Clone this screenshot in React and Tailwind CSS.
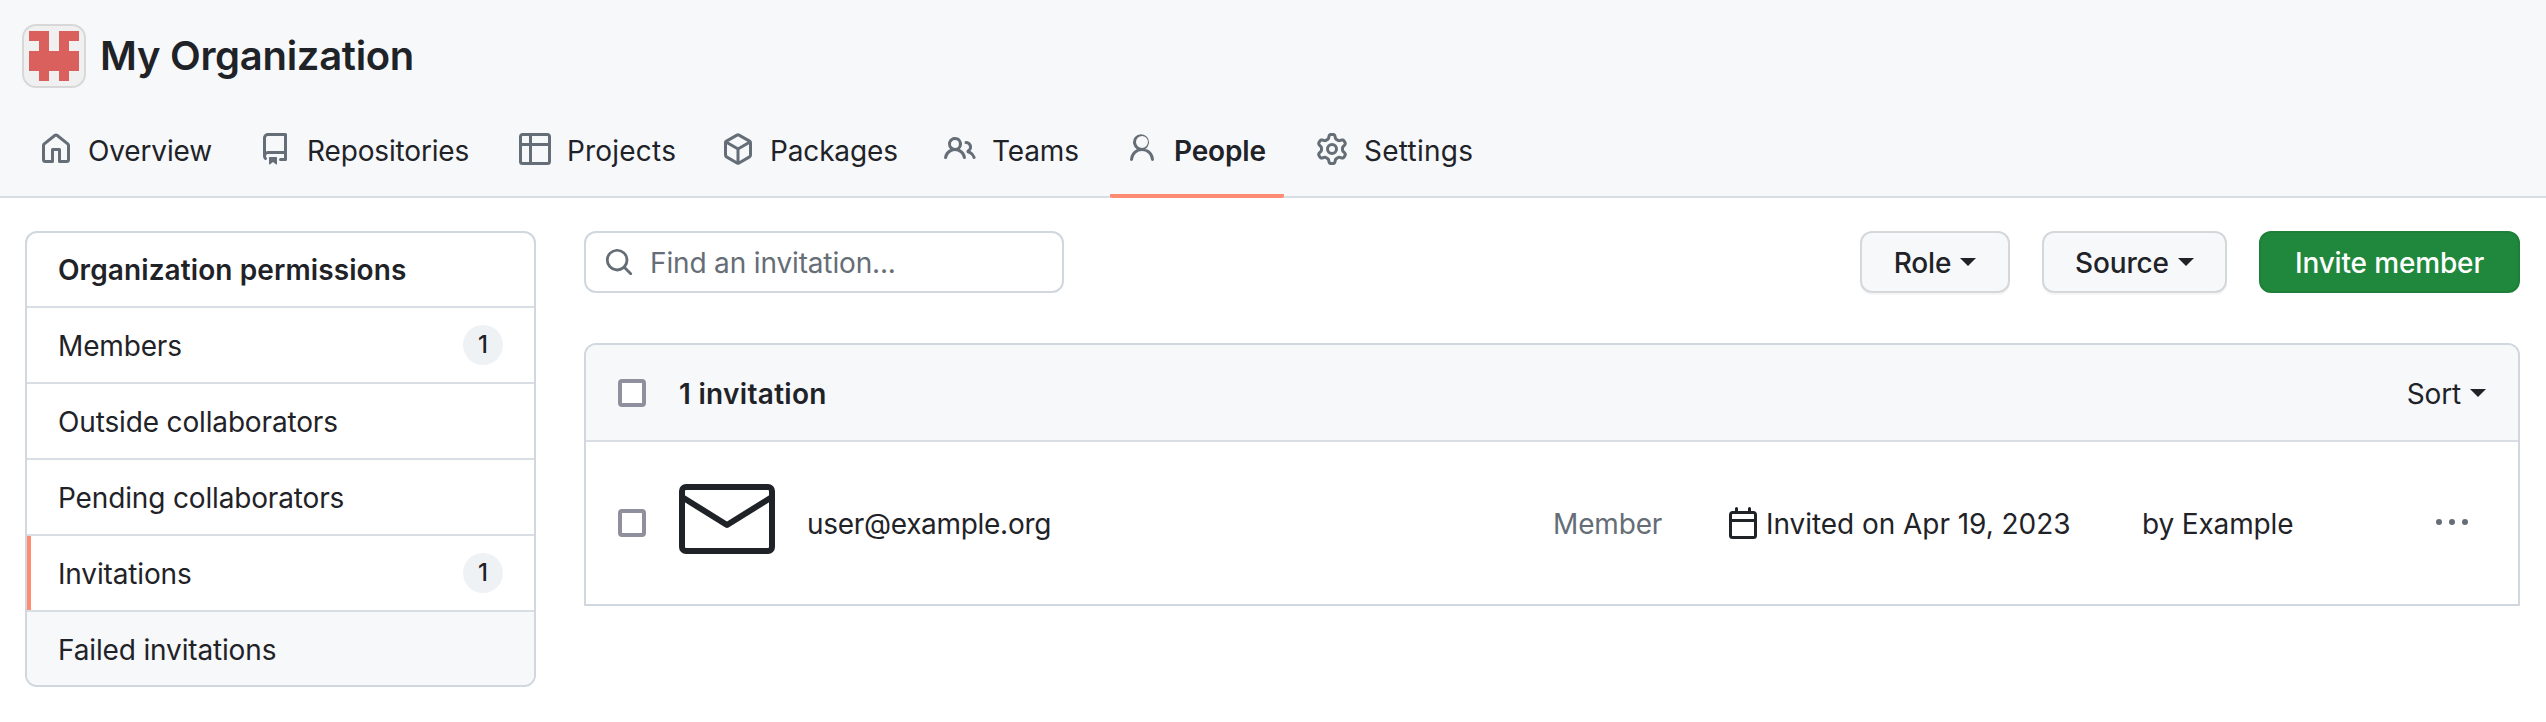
import React from "react";

// octicons, 16 grid
const paths = {
  home: "M6.906.664a1.749 1.749 0 0 1 2.187 0l5.25 4.2c.415.332.657.835.657 1.367v7.019A1.75 1.75 0 0 1 13.25 15h-3.5a.75.75 0 0 1-.75-.75V9H7v5.25a.75.75 0 0 1-.75.75h-3.5A1.75 1.75 0 0 1 1 13.25V6.23c0-.531.242-1.034.657-1.366l5.25-4.2Zm1.25 1.171a.25.25 0 0 0-.312 0l-5.25 4.2a.25.25 0 0 0-.094.196v7.019c0 .138.112.25.25.25H5.5V8.25a.75.75 0 0 1 .75-.75h3.5a.75.75 0 0 1 .75.75v5.25h2.75a.25.25 0 0 0 .25-.25V6.23a.25.25 0 0 0-.094-.195Z",
  repo: "M2 2.5A2.5 2.5 0 0 1 4.5 0h8.75a.75.75 0 0 1 .75.75v12.5a.75.75 0 0 1-.75.75h-2.5a.75.75 0 0 1 0-1.5h1.75v-2h-8a1 1 0 0 0-.714 1.7.75.75 0 1 1-1.072 1.05A2.495 2.495 0 0 1 2 11.5Zm10.5-1h-8a1 1 0 0 0-1 1v6.708A2.486 2.486 0 0 1 4.5 9h8ZM5 12.25a.25.25 0 0 1 .25-.25h3.5a.25.25 0 0 1 .25.25v3.25a.25.25 0 0 1-.4.2l-1.45-1.087a.249.249 0 0 0-.3 0L5.4 15.7a.25.25 0 0 1-.4-.2Z",
  table: "M0 1.75C0 .784.784 0 1.75 0h12.5C15.216 0 16 .784 16 1.75v12.5A1.75 1.75 0 0 1 14.25 16H1.75A1.75 1.75 0 0 1 0 14.25ZM6.5 6.5v8h7.75a.25.25 0 0 0 .25-.25V6.5Zm8-1.5V1.75a.25.25 0 0 0-.25-.25H6.5V5ZM5 5V1.5H1.75a.25.25 0 0 0-.25.25V5Zm-3.5 1.5v7.75c0 .138.112.25.25.25H5v-8Z",
  pack: "m8.878.392 5.25 3.045c.54.314.872.89.872 1.514v6.098a1.75 1.75 0 0 1-.872 1.514l-5.25 3.045a1.75 1.75 0 0 1-1.756 0l-5.25-3.045A1.75 1.75 0 0 1 1 11.049V4.951c0-.624.332-1.201.872-1.514L7.122.392a1.75 1.75 0 0 1 1.756 0ZM7.875 1.69l-4.63 2.685L8 7.133l4.755-2.758-4.63-2.685a.248.248 0 0 0-.25 0ZM2.5 5.677v5.372c0 .09.047.171.125.216l4.625 2.683V8.432Zm6.25 8.271 4.625-2.683a.25.25 0 0 0 .125-.216V5.677L8.75 8.432Z",
  people: "M2 5.5a3.5 3.5 0 1 1 5.898 2.549 5.508 5.508 0 0 1 3.034 4.084.75.75 0 1 1-1.482.235 4 4 0 0 0-7.9 0 .75.75 0 0 1-1.482-.236A5.507 5.507 0 0 1 3.102 8.05 3.493 3.493 0 0 1 2 5.5ZM11 4a3.001 3.001 0 0 1 2.22 5.018 5.01 5.01 0 0 1 2.56 3.012.749.749 0 0 1-.885.954.752.752 0 0 1-.549-.514 3.507 3.507 0 0 0-2.522-2.372.75.75 0 0 1-.574-.73v-.352a.75.75 0 0 1 .416-.672A1.5 1.5 0 0 0 11 5.5.75.75 0 0 1 11 4Zm-5.5-.5a2 2 0 1 0-.001 3.999A2 2 0 0 0 5.5 3.5Z",
  person: "M10.561 8.073a6.005 6.005 0 0 1 3.432 5.142.75.75 0 1 1-1.498.07 4.5 4.5 0 0 0-8.99 0 .75.75 0 0 1-1.498-.07 6.004 6.004 0 0 1 3.431-5.142 3.999 3.999 0 1 1 4.123 0ZM11 4.5a3 3 0 1 0-6 0 3 3 0 0 0 6 0Z",
  gear: "M8 0a8.2 8.2 0 0 1 .701.031C9.444.095 9.99.645 10.16 1.29l.288 1.107c.018.066.079.158.212.224.231.114.454.243.668.386.123.082.233.09.299.071l1.103-.303c.644-.176 1.392.021 1.82.63.27.385.506.792.704 1.218.315.675.111 1.422-.364 1.891l-.814.806c-.049.048-.098.147-.088.294.016.257.016.515 0 .772-.01.147.038.246.088.294l.814.806c.475.469.679 1.216.364 1.891a7.977 7.977 0 0 1-.704 1.217c-.428.61-1.176.807-1.82.63l-1.102-.302c-.067-.019-.177-.011-.3.071a5.909 5.909 0 0 1-.668.386c-.133.066-.194.158-.211.224l-.29 1.106c-.168.646-.715 1.196-1.458 1.26a8.006 8.006 0 0 1-1.402 0c-.743-.064-1.289-.614-1.458-1.26l-.289-1.106c-.018-.066-.079-.158-.212-.224a5.738 5.738 0 0 1-.668-.386c-.123-.082-.233-.09-.299-.071l-1.103.303c-.644.176-1.392-.021-1.82-.63a8.12 8.12 0 0 1-.704-1.218c-.315-.675-.111-1.422.363-1.891l.815-.806c.05-.048.098-.147.088-.294a6.214 6.214 0 0 1 0-.772c.01-.147-.038-.246-.088-.294l-.815-.806C.635 6.045.431 5.298.746 4.623a7.92 7.92 0 0 1 .704-1.217c.428-.61 1.176-.807 1.82-.63l1.102.302c.067.019.177.011.3-.071.214-.143.437-.272.668-.386.133-.066.194-.158.211-.224l.29-1.106C6.009.645 6.556.095 7.299.03 7.53.01 7.764 0 8 0Zm-.571 1.525c-.036.003-.108.036-.137.146l-.289 1.105c-.147.561-.549.967-.998 1.189-.173.086-.34.183-.5.29-.417.278-.97.423-1.529.27l-1.103-.303c-.109-.03-.175.016-.195.045-.22.312-.412.644-.573.99-.014.031-.021.11.059.19l.815.806c.411.406.562.957.53 1.456a4.709 4.709 0 0 0 0 .582c.032.499-.119 1.05-.53 1.456l-.815.806c-.081.08-.073.159-.059.19.162.346.353.677.573.989.02.03.085.076.195.046l1.102-.303c.56-.153 1.113-.008 1.53.27.161.107.328.204.501.29.447.222.85.629.997 1.189l.289 1.105c.029.109.101.143.137.146a6.6 6.6 0 0 0 1.142 0c.036-.003.108-.036.137-.146l.289-1.105c.147-.561.549-.967.998-1.189.173-.086.34-.183.5-.29.417-.278.97-.423 1.529-.27l1.103.303c.109.029.175-.016.195-.045.22-.313.411-.644.573-.99.014-.031.021-.11-.059-.19l-.815-.806c-.411-.406-.562-.957-.53-1.456a4.709 4.709 0 0 0 0-.582c-.032-.499.119-1.05.53-1.456l.815-.806c.081-.08.073-.159.059-.19a6.464 6.464 0 0 0-.573-.989c-.02-.03-.085-.076-.195-.046l-1.102.303c-.56.153-1.113.008-1.53-.27a4.44 4.44 0 0 0-.501-.29c-.447-.222-.85-.629-.997-1.189l-.289-1.105c-.029-.11-.101-.143-.137-.146a6.6 6.6 0 0 0-1.142 0ZM11 8a3 3 0 1 1-6 0 3 3 0 0 1 6 0ZM9.5 8a1.5 1.5 0 1 0-3.001.001A1.5 1.5 0 0 0 9.5 8Z",
  search: "M10.68 11.74a6 6 0 0 1-7.922-8.982 6 6 0 0 1 8.982 7.922l3.04 3.04a.749.749 0 0 1-.326 1.275.749.749 0 0 1-.734-.215ZM11.5 7a4.499 4.499 0 1 0-8.997 0A4.499 4.499 0 0 0 11.5 7Z",
  calendar: "M4.75 0a.75.75 0 0 1 .75.75V2h5V.75a.75.75 0 0 1 1.5 0V2h1.25c.966 0 1.75.784 1.75 1.75v10.5A1.75 1.75 0 0 1 13.25 16H2.75A1.75 1.75 0 0 1 1 14.25V3.75C1 2.784 1.784 2 2.75 2H4V.75A.75.75 0 0 1 4.75 0ZM2.5 7.5v6.75c0 .138.112.25.25.25h10.5a.25.25 0 0 0 .25-.25V7.5Zm10.75-4H2.75a.25.25 0 0 0-.25.25V6h11V3.75a.25.25 0 0 0-.25-.25Z",
  kebab: "M8 9a1.5 1.5 0 1 0 0-3 1.5 1.5 0 0 0 0 3ZM1.5 9a1.5 1.5 0 1 0 0-3 1.5 1.5 0 0 0 0 3Zm13 0a1.5 1.5 0 1 0 0-3 1.5 1.5 0 0 0 0 3Z",
};

function Octicon({ name, className }) {
  return (
    <svg viewBox="0 0 16 16" fill="currentColor" className={className}>
      <path d={paths[name]} />
    </svg>
  );
}

const tabs = [
  { label: "Overview", icon: "home", text: "w-[123px]" },
  { label: "Repositories", icon: "repo", text: "w-[164px]" },
  { label: "Projects", icon: "table", text: "w-[107px] tracking-[0.2px]" },
  { label: "Packages", icon: "pack", text: "w-[126px]" },
  { label: "Teams", icon: "people", text: "w-[86px]" },
  { label: "People", icon: "person", text: "w-[94px]", active: true },
  { label: "Settings", icon: "gear", text: "w-[109px] tracking-[0.25px]" },
];

const sideItems = [
  { label: "Organization permissions", head: true },
  { label: "Members", count: 1 },
  { label: "Outside collaborators" },
  { label: "Pending collaborators" },
  { label: "Invitations", count: 1, current: true },
  { label: "Failed invitations", muted: true },
];

function Caret() {
  return <span className="w-0 h-0 border-x-[8px] border-t-[8px] border-x-transparent border-t-current" />;
}

function Checkbox() {
  return <span className="block w-[28px] h-[28px] rounded-[4px] border-[4px] border-[#8f8f9d] bg-white shrink-0" />;
}

function FilterButton({ label, width }) {
  return (
    <button
      type="button"
      className={`flex items-center justify-center gap-[9px] h-[62px] ${width} rounded-[12px] border-2 border-[#d5d8da] bg-[#f6f8fa] shadow-[0_2px_0_rgba(31,35,40,0.04)] font-medium`}
    >
      <span className="pt-[2px]">{label}</span>
      <Caret />
    </button>
  );
}

function App() {
  return (
    <div className="min-h-[722px] bg-white text-[28px] leading-[36px] text-[#1f2328] tracking-[-0.15px] font-['Inter','Liberation_Sans',sans-serif]">
      {/* Header */}
      <header className="h-[198px] bg-[#f6f8fa] border-b-2 border-[#d8dee4]">
        <div className="flex items-center gap-[14px] pl-[22px] pt-[24px]">
          <div className="w-[64px] h-[64px] rounded-[14px] border-2 border-[#d8d8d8] bg-[#f0f0f0] box-border">
            <svg viewBox="2 2 60 60" className="w-[60px] h-[60px]">
              <polygon
                fill="#d9605c"
                points="7,7 27,7 27,27 37,27 37,7 57,7 57,17 47,17 47,27 57,27 57,47 47,47 47,57 37,57 37,47 27,47 27,57 17,57 17,47 7,47 7,27 17,27 17,17 7,17"
              />
            </svg>
          </div>
          <h1 className="text-[40px] leading-[60px] font-semibold tracking-[-0.3px]">My Organization</h1>
        </div>
        <nav className="flex pl-[24px] pt-[16px]">
          {tabs.map(({ label, icon, text, active }) => (
            <a
              key={label}
              className={`flex items-center gap-[16px] h-[94px] px-[16px] mr-[16px] border-b-4 rounded-b-[2px] ${
                active ? "border-[#fd8c73] font-semibold" : "border-transparent"
              }`}
            >
              <Octicon name={icon} className="w-[32px] h-[32px] text-[#656d76]" />
              <span className={`pt-[3px] whitespace-nowrap ${text}`}>{label}</span>
            </a>
          ))}
        </nav>
      </header>

      <main className="flex gap-[48px] pl-[25px] pr-[26px] pt-[33px]">
        {/* Sidebar */}
        <aside className="w-[511px] shrink-0 rounded-[12px] border-2 border-[#d0d7de] overflow-hidden h-[456px]">
          {sideItems.map((item, i) => (
            <div
              key={item.label}
              className={`relative flex items-center justify-between px-[31px] ${
                i > 0 ? "h-[76px] border-t-2 border-[#d8dee4]" : "h-[73px]"
              } ${item.head ? "font-semibold tracking-[0.1px]" : ""} ${item.muted ? "bg-[#f6f8fa]" : ""}`}
            >
              {item.current && <span className="absolute left-0 top-0 bottom-0 w-[4px] bg-[#fd8c73]" />}
              <span className={item.head ? "" : "pt-[2px]"}>{item.label}</span>
              {item.count && (
                <span className="flex items-center justify-center w-[40px] h-[40px] rounded-full bg-[#eff2f5] text-[24px] font-medium">
                  {item.count}
                </span>
              )}
            </div>
          ))}
        </aside>

        {/* Invitations */}
        <section className="flex-1">
          <div className="flex items-center">
            <div className="flex items-center gap-[16px] w-[480px] h-[62px] pl-[18px] rounded-[12px] border-2 border-[#d0d7de] text-[#656d76]">
              <Octicon name="search" className="w-[30px] h-[30px]" />
              <span className="pt-[2px]">Find an invitation...</span>
            </div>
            <div className="flex items-center gap-[32px] ml-auto">
              <FilterButton label="Role" width="w-[150px]" />
              <FilterButton label="Source" width="w-[185px]" />
              <button
                type="button"
                className="h-[62px] w-[261px] pt-[2px] rounded-[12px] bg-[#1f883d] border-2 border-[#1d7f39] text-white font-medium"
              >
                Invite member
              </button>
            </div>
          </div>

          <div className="mt-[50px] rounded-t-[12px] border-2 border-[#d0d7de]">
            <div className="flex items-center h-[97px] pl-[32px] pr-[32px] bg-[#f6f8fa] rounded-t-[10px] border-b-2 border-[#d8dee4]">
              <Checkbox />
              <span className="ml-[33px] pt-[2px] font-semibold tracking-[0.3px]">1 invitation</span>
              <span className="flex items-center gap-[9px] ml-auto">
                <span className="pt-[2px]">Sort</span>
                <Caret />
              </span>
            </div>
            <div className="flex items-center h-[162px] pl-[32px]">
              <Checkbox />
              <svg
                viewBox="0 0 96 70"
                fill="none"
                stroke="#1f2328"
                strokeWidth="6"
                strokeLinejoin="round"
                strokeLinecap="round"
                className="w-[96px] h-[70px] ml-[33px] mb-[9px]"
              >
                <rect x="3" y="3" width="90" height="64" rx="4" />
                <path d="M3 13 L48 41 L93 13" />
              </svg>
              <span className="ml-[32px] w-[746px] pt-[2px] tracking-[-0.3px]">user@example.org</span>
              <span className="w-[174px] pt-[2px] text-[#656d76]">Member</span>
              <Octicon name="calendar" className="w-[32px] h-[32px]" />
              <span className="ml-[7px] w-[376px] pt-[2px] tracking-[-0.05px]">Invited on Apr 19, 2023</span>
              <span className="w-[294px] pt-[2px]">by Example</span>
              <Octicon name="kebab" className="w-[32px] h-[32px] text-[#656d76]" />
            </div>
          </div>
        </section>
      </main>
    </div>
  );
}

export default App;
